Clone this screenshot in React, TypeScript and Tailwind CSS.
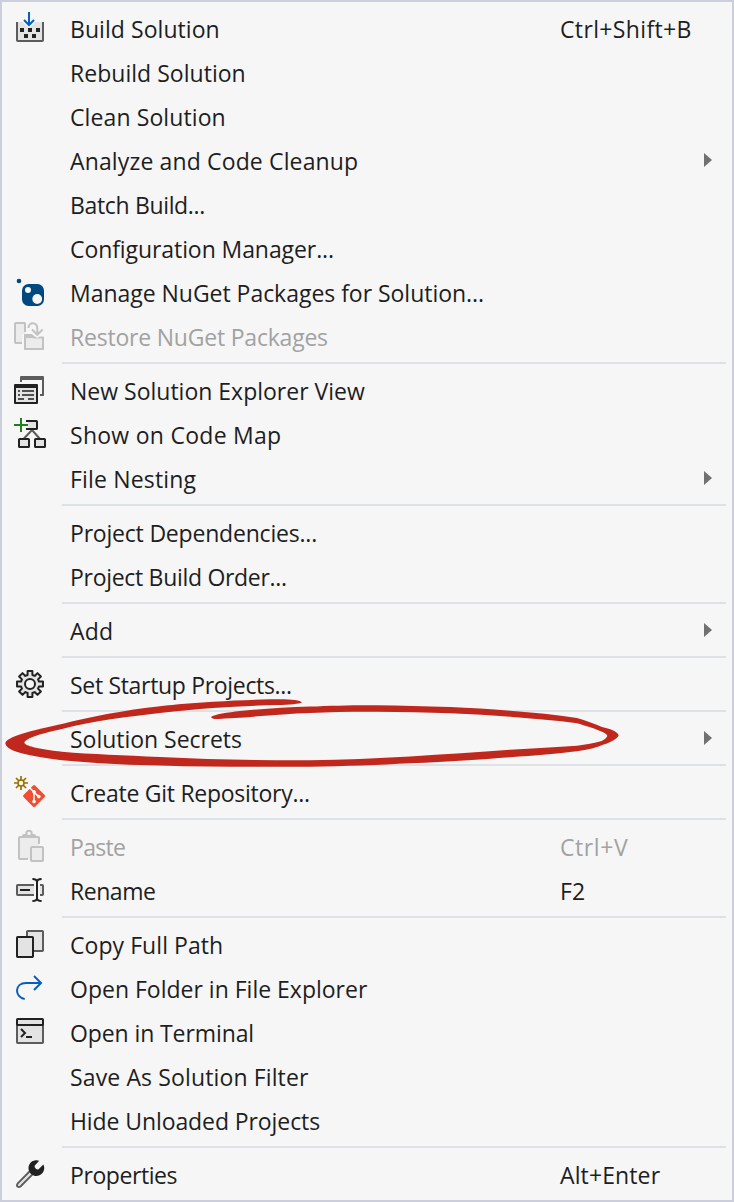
import React from "react";

const INK = "#212121";
const MID = "#5c5c5c";
const FILL = "#e3e3e3";
const OFF = "#c2c2c2";
const BLUE = "#0560bd";

function Icon({ children }: { children: React.ReactNode }) {
  return (
    <svg className="mt-1 h-8 w-8 shrink-0 overflow-visible" viewBox="0 0 32 32" fill="none">
      {children}
    </svg>
  );
}

const gearPath = (() => {
  const pts: string[] = [];
  for (let i = 0; i < 8; i++) {
    const a = i * 45 - 90;
    const corners: [number, number][] = [[-15, 9.3], [-10.5, 13.2], [10.5, 13.2], [15, 9.3]];
    for (const [offset, r] of corners) {
      const t = ((a + offset) * Math.PI) / 180;
      pts.push(`${(16 + r * Math.cos(t)).toFixed(2)} ${(16 + r * Math.sin(t)).toFixed(2)}`);
    }
  }
  return `M${pts.join("L")}Z`;
})();

const icons: Record<string, React.ReactNode> = {
  build: (
    <>
      <path d="M3 10V29H29V10" fill={FILL} />
      <path d="M3 10V28.2Q3 29 3.8 29H28.2Q29 29 29 28.2V10" stroke={MID} strokeWidth="2" />
      <path d="M8 8L15 15L22 8Z" fill="#f6f6f6" stroke="#f6f6f6" strokeWidth="2" />
      <path d="M6 16h4v4h-4zM14 16h4v4h-4zM22 16h4v4h-4zM10 22h4v4h-4zM18 22h4v4h-4z" fill={INK} />
      <path d="M15 0V13M10 8L15 13L20 8" stroke={BLUE} strokeWidth="2" />
    </>
  ),
  nuget: (
    <>
      <circle cx="5" cy="5" r="2.3" fill="#004880" />
      <rect x="8" y="8" width="22" height="22" rx="6.5" fill="#004880" />
      <circle cx="14" cy="14" r="3" fill="#f6f6f6" />
      <circle cx="23.2" cy="23" r="4.9" fill="#f6f6f6" />
    </>
  ),
  restore: (
    <>
      <path d="M1 3H11V14H8V23H1Z" fill="#ececec" />
      <path d="M11 12V3.8Q11 3 10.2 3H1.8Q1 3 1 3.8V22.2Q1 23 1.8 23H8" stroke={OFF} strokeWidth="2" />
      <path d="M11 15H19L21 18H29V29H11Z" fill="#ececec" />
      <path d="M10 14.8Q10 14 10.8 14H18L20.5 16.5H29.2Q30 16.5 30 17.3V29.2Q30 30 29.2 30H10.8Q10 30 10 29.2ZM12 18V28H28V18.5H20L18.5 18Z" fill={OFF} fillRule="evenodd" />
      <path d="M14.5 8C14.5 1.5 23.3 1.5 23.3 8.5V14M18 9.5L23.3 14.8L28.6 9.5" stroke="#f6f6f6" strokeWidth="5" />
      <path d="M14.5 8C14.5 1.5 23.3 1.5 23.3 8.5V14M18 9.5L23.3 14.8L28.6 9.5" stroke={OFF} strokeWidth="2" />
    </>
  ),
  explorer: (
    <>
      <path d="M6 8V3Q6 2 7 2H29Q30 2 30 3V21.2Q30 22 29.2 22H26V20H28V6H8V8Z" fill={MID} />
      <rect x="1" y="11" width="22" height="18" fill={FILL} />
      <path d="M0 11Q0 10 1 10H23Q24 10 24 11V29Q24 30 23 30H1Q0 30 0 29ZM2 14V28H22V14Z" fill={INK} fillRule="evenodd" />
      <path d="M4 17h2M8 17h12M4 21h2M8 21h12M4 25h6M14 25h6" stroke={INK} strokeWidth="1.6" />
    </>
  ),
  codemap: (
    <>
      <path d="M18 12L9.5 21M18 12L26 21" stroke={MID} strokeWidth="2" />
      <rect x="14" y="3" width="9" height="8" fill={FILL} />
      <path d="M12 3H22.4Q23 3 23 3.6V10.4Q23 11 22.4 11H13V10" stroke={INK} strokeWidth="2" />
      <rect x="5" y="21" width="10" height="8" rx=".6" fill={FILL} stroke={INK} strokeWidth="2" />
      <rect x="21" y="21" width="10" height="8" rx=".6" fill={FILL} stroke={INK} strokeWidth="2" />
      <path d="M7 0V14M0 7H14" stroke="#f6f6f6" strokeWidth="5" />
      <path d="M7 0V14M0 7H14" stroke="#1f801f" strokeWidth="2" />
    </>
  ),
  gear: (
    <>
      <path d={gearPath} fill={FILL} stroke={INK} strokeWidth="2" strokeLinejoin="round" />
      <circle cx="16" cy="16" r="5" fill="#f6f6f6" stroke={INK} strokeWidth="2" />
    </>
  ),
  git: (
    <>
      <path d="M7 0V4M7 10V14M0 7H4M10 7H14M2 2L5 5M9 9L12 12M12 2L9 5M5 9L2 12" stroke="#996f00" strokeWidth="1.7" />
      <circle cx="7" cy="7" r="3" fill="#fbf8ee" stroke="#996f00" strokeWidth="1.5" />
      <rect x="11.9" y="11.9" width="16.4" height="16.4" rx="1.4" transform="rotate(45 20.1 20.1)" fill="#f04e32" />
      <path d="M14.6 10.8L24.6 20.6M20 15.8V25.5" stroke="#fff" strokeWidth="1.5" />
      <g fill="#fff">
        <circle cx="20" cy="15.8" r="1.8" />
        <circle cx="24.8" cy="20.6" r="1.8" />
        <circle cx="20" cy="25.6" r="1.8" />
      </g>
    </>
  ),
  paste: (
    <>
      <path d="M5 7H25V16H16V29H5Z" fill="#ececec" />
      <path d="M25 14V7.8Q25 7 24.2 7H5.8Q5 7 5 7.8V28.2Q5 29 5.8 29H14" stroke={OFF} strokeWidth="2" />
      <path d="M8 8V6Q8 4 10 4H20Q22 4 22 6V8Z" fill={OFF} />
      <circle cx="15" cy="3.4" r="2.7" fill="#f6f6f6" stroke={OFF} strokeWidth="2" />
      <rect x="17" y="17" width="12" height="14" rx=".7" fill="#ececec" stroke={OFF} strokeWidth="2" />
    </>
  ),
  rename: (
    <>
      <path d="M3 11H29V21H3Z" fill={FILL} />
      <path d="M20 11H3.7Q3 11 3 11.7V20.3Q3 21 3.7 21H20M26 11H28.3Q29 11 29 11.7V20.3Q29 21 28.3 21H26" stroke={MID} strokeWidth="2" />
      <path d="M20 8h6v16h-6z" fill="#f6f6f6" />
      <path d="M6 16H16" stroke={INK} strokeWidth="2" />
      <path d="M18.4 5C21 5 23 6 23 8V24C23 26 21 27 18.4 27M27.6 5C25 5 23 6 23 8M27.6 27C25 27 23 26 23 24" stroke={INK} strokeWidth="2" />
    </>
  ),
  copy: (
    <>
      <rect x="13" y="3" width="16" height="20" rx=".7" fill={FILL} stroke={MID} strokeWidth="2" />
      <rect x="3" y="9" width="16" height="20" rx=".7" fill={FILL} stroke={INK} strokeWidth="2" />
    </>
  ),
  redo: <path d="M10.7 27C0 25 .5 11 12 11H27M20 4L27 11L20 18" stroke={BLUE} strokeWidth="2" />,
  terminal: (
    <>
      <path d="M3 8V26.3Q3 27 3.7 27H28.3Q29 27 29 26.3V8Z" fill={FILL} stroke={MID} strokeWidth="2" />
      <rect x="3" y="3" width="26" height="6" rx=".7" fill={FILL} stroke={INK} strokeWidth="2" />
      <path d="M7 13L11 17L7 21M12 21H18" stroke={INK} strokeWidth="2" />
    </>
  ),
  wrench: (
    <>
      <path d="M15.5 13.5L3.8 25.3Q2.3 27.2 3.5 28.5Q5 29.7 6.7 28.2L18.5 16.4" fill={FILL} stroke={MID} strokeWidth="1.9" />
      <path d="M25.2 2.7A7.9 7.9 0 1 0 29.4 6.5L24.3 11.4Q22.8 11.6 21.6 10.4Q20.4 9.3 20.6 7.8Z" fill={INK} />
    </>
  ),
};

type Item = { label: string; ls: string; icon?: string; key?: string; kls?: string; sub?: boolean; off?: boolean };

const groups: Item[][] = [
  [
    { label: "Build Solution", ls: "tracking-[0.06px]", icon: "build", key: "Ctrl+Shift+B", kls: "tracking-[0.36px]" },
    { label: "Rebuild Solution", ls: "tracking-[0.03px]" },
    { label: "Clean Solution", ls: "tracking-[0.1px]" },
    { label: "Analyze and Code Cleanup", ls: "tracking-[0.14px]", sub: true },
    { label: "Batch Build...", ls: "tracking-[-0.34px]" },
    { label: "Configuration Manager...", ls: "tracking-[-0.08px]" },
    { label: "Manage NuGet Packages for Solution...", ls: "tracking-[-0.03px]", icon: "nuget" },
    { label: "Restore NuGet Packages", ls: "tracking-[-0.21px]", icon: "restore", off: true },
  ],
  [
    { label: "New Solution Explorer View", ls: "tracking-[0px]", icon: "explorer" },
    { label: "Show on Code Map", ls: "tracking-[0.27px]", icon: "codemap" },
    { label: "File Nesting", ls: "tracking-[0.17px]", sub: true },
  ],
  [
    { label: "Project Dependencies...", ls: "tracking-[-0.2px]" },
    { label: "Project Build Order...", ls: "tracking-[-0.3px]" },
  ],
  [{ label: "Add", ls: "tracking-[0.19px]", sub: true }],
  [{ label: "Set Startup Projects...", ls: "tracking-[-0.32px]", icon: "gear" }],
  [{ label: "Solution Secrets", ls: "tracking-[-0.02px]", sub: true }],
  [{ label: "Create Git Repository...", ls: "tracking-[-0.27px]", icon: "git" }],
  [
    { label: "Paste", ls: "tracking-[-0.7px]", icon: "paste", key: "Ctrl+V", kls: "tracking-[0.59px]", off: true },
    { label: "Rename", ls: "tracking-[-0.45px]", icon: "rename", key: "F2", kls: "tracking-[0.13px]" },
  ],
  [
    { label: "Copy Full Path", ls: "tracking-[0.06px]", icon: "copy" },
    { label: "Open Folder in File Explorer", ls: "tracking-[0px]", icon: "redo" },
    { label: "Open in Terminal", ls: "tracking-[-0.1px]", icon: "terminal" },
    { label: "Save As Solution Filter", ls: "tracking-[0.13px]" },
    { label: "Hide Unloaded Projects", ls: "tracking-[-0.09px]" },
  ],
  [{ label: "Properties", ls: "tracking-[-0.42px]", icon: "wrench", key: "Alt+Enter", kls: "tracking-[0.12px]" }],
];

function Row({ item }: { item: Item }) {
  return (
    <div className={`flex h-11 pl-3 leading-[42px] whitespace-nowrap ${item.off ? "text-[#a2a2a2]" : "text-[#1e1e1e]"}`}>
      <div className="flex w-14 shrink-0">{item.icon && <Icon>{icons[item.icon]}</Icon>}</div>
      <span className={`w-[490px] shrink-0 ${item.ls}`}>{item.label}</span>
      <span className={`w-36 shrink-0 ${item.kls ?? ""}`}>{item.key}</span>
      {item.sub && (
        <svg className="mt-[13px] h-[14px] w-2 shrink-0" viewBox="0 0 8 14">
          <path d="M0 0L8 7L0 14Z" fill="#717171" />
        </svg>
      )}
    </div>
  );
}

function Scribble() {
  return (
    <svg className="pointer-events-none absolute top-[690px] left-0 h-[90px] w-[640px]" viewBox="0 690 640 90">
      <path
        fill="#c1281d"
        d="M302 702.5C300 699.5 288 698.8 270 699.3C250 699.8 232 700.5 213 701.8C193 703 176 704.5 160 706.3C125 710 90 717 62 724C42 728.5 8 735 5.3 743C6 750 20 755 62 760.3C90 763 125 765 160 765.4C210 767 260 767 310 766.7C345 766.3 380 765 410 763.3C450 761.5 480 759.5 510 757.2C535 755.5 558 753.5 577 751.2C590 749.5 598 747 603 744.7C612 742 618 738 618.7 735.2C617 731 610 729 602 727C594 723.5 586 720.5 577 718C556 714.5 534 712.5 510 710.7C490 709 470 707.7 450 707C425 706 400 705.5 377 705.2C355 705 330 705.6 310 706.6C285 707.5 260 709 240 711C228 712.3 214 714.5 211 717C212 719 215 719.2 219 718.9C227 718.3 233 718 240 717.8C265 715.5 288 713.8 310 713C333 712 355 711.6 377 711.8C402 712.2 427 712.5 450 713.3C472 714.2 492 715.4 510 716.7C534 718.5 557 720.5 577 723.2C587 726 596 729 602 731.7C605 733 607 734.3 607.3 736C606 738.5 604 739.8 601.7 741C594 743.2 586 744.6 577 745.8C556 747.4 534 748.3 510 749.8C478 752.3 444 754.3 410 756.5C376 758.5 343 759.8 310 760.3C258 760.5 208 759.5 160 757C124 755.4 92 754.4 62 751.8C44 749.5 26 747 24.3 742.8C26 737.5 44 733 62 729C94 721 127 716.8 160 713.1C178 710.8 196 709 213 707.9C234 706.7 256 705.6 277 705.1C290 704.5 299 704 302 702.5Z"
      />
    </svg>
  );
}

export default function App() {
  return (
    <div className="relative h-[1202px] w-[734px] overflow-hidden border-2 border-[#cccedb] bg-[#f6f6f6] pt-1.5 font-['Open_Sans','Noto_Sans',sans-serif] text-[23px]">
      {groups.map((group, g) => (
        <React.Fragment key={g}>
          {g > 0 && <div className="mt-0.5 mr-1.5 mb-1.5 ml-[60px] h-0.5 bg-[#dee1e5]" />}
          {group.map((item) => (
            <Row key={item.label} item={item} />
          ))}
        </React.Fragment>
      ))}
      <div className="absolute -top-0.5 -left-0.5">
        <Scribble />
      </div>
    </div>
  );
}
